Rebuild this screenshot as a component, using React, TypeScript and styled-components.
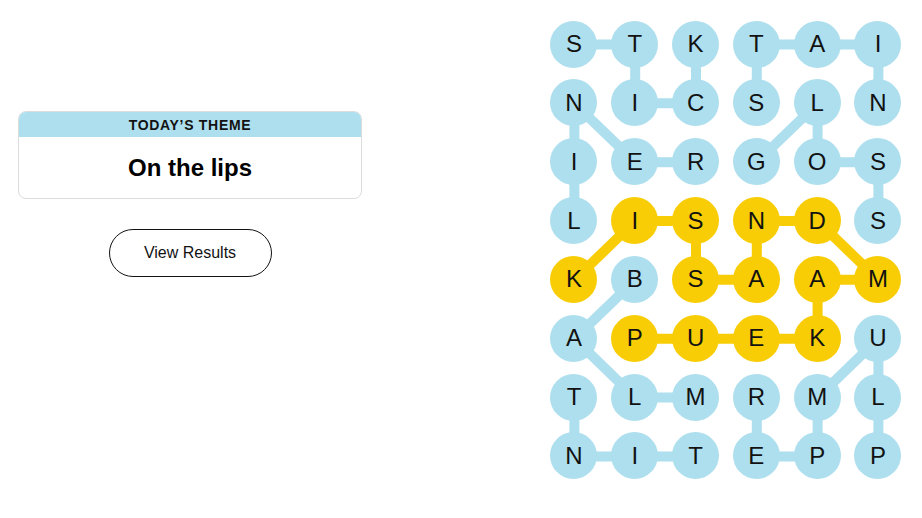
import React from 'react';
import styled, { createGlobalStyle } from 'styled-components';

const COL_W = 60.8;
const ROW_H = 58.857;
const BLUE = '#aedfee';
const GOLD = '#f8cd05';

const GlobalStyle = createGlobalStyle`
  html, body {
    margin: 0;
    padding: 0;
    background: #fff;
  }
  body {
    font-family: 'Liberation Sans', Arial, sans-serif;
    color: #121212;
  }
`;

const Page = styled.main`
  display: flex;
  align-items: flex-start;
  width: 922px;
  height: 518px;
  overflow: hidden;
`;

const Sidebar = styled.section`
  width: 344px;
  padding: 111px 0 0 18px;
  display: flex;
  flex-direction: column;
  align-items: center;
`;

const ThemeCard = styled.div`
  width: 100%;
  box-sizing: border-box;
  border: 1px solid #dcdcdc;
  border-radius: 8px;
  overflow: hidden;
`;

const ThemeLabel = styled.div`
  height: 25px;
  background: ${BLUE};
  display: flex;
  align-items: center;
  justify-content: center;
  font-size: 14px;
  font-weight: 700;
  letter-spacing: 0.7px;
  text-transform: uppercase;
  color: #121212;
`;

const ThemeTitle = styled.h1`
  margin: 0;
  height: 61px;
  display: flex;
  align-items: center;
  justify-content: center;
  font-size: 24px;
  font-weight: 700;
  color: #000;
`;

const ResultsButton = styled.button`
  margin-top: 30px;
  width: 163px;
  height: 48px;
  border: 1px solid #121212;
  border-radius: 24px;
  background: #fff;
  font-family: inherit;
  font-size: 16px;
  color: #121212;
  cursor: pointer;
`;

const Board = styled.div`
  position: relative;
  margin: 14.6px 0 0 181.6px;
  display: grid;
  grid-template-columns: repeat(6, ${COL_W}px);
  grid-template-rows: repeat(8, ${ROW_H}px);
`;

const Links = styled.svg`
  position: absolute;
  inset: 0;
  width: 100%;
  height: 100%;
  z-index: 0;
`;

const Cell = styled.div`
  position: relative;
  z-index: 1;
  display: flex;
  align-items: center;
  justify-content: center;
`;

const Letter = styled.span<{ $spangram: boolean }>`
  width: 47px;
  height: 47px;
  border-radius: 50%;
  background: ${(p) => (p.$spangram ? GOLD : BLUE)};
  display: flex;
  align-items: center;
  justify-content: center;
  font-size: 24px;
  color: #121212;
`;

const letters = [
  'STKTAI',
  'NICSLN',
  'IERGOS',
  'LISNDS',
  'KBSAAM',
  'APUEKU',
  'TLMRML',
  'NITEPP',
];

type Pos = [number, number];

const words: { word: string; spangram?: boolean; path: Pos[] }[] = [
  { word: 'STICK', path: [[0, 0], [0, 1], [1, 1], [1, 2], [0, 2]] },
  { word: 'STAIN', path: [[1, 3], [0, 3], [0, 4], [0, 5], [1, 5]] },
  { word: 'GLOSS', path: [[2, 3], [1, 4], [2, 4], [2, 5], [3, 5]] },
  { word: 'LINER', path: [[3, 0], [2, 0], [1, 0], [2, 1], [2, 2]] },
  { word: 'BALM', path: [[4, 1], [5, 0], [6, 1], [6, 2]] },
  { word: 'TINT', path: [[6, 0], [7, 0], [7, 1], [7, 2]] },
  { word: 'PLUMPER', path: [[7, 5], [6, 5], [5, 5], [6, 4], [7, 4], [7, 3], [6, 3]] },
  {
    word: 'KISSANDMAKEUP',
    spangram: true,
    path: [[4, 0], [3, 1], [3, 2], [4, 2], [4, 3], [3, 3], [3, 4], [4, 5], [4, 4], [5, 4], [5, 3], [5, 2], [5, 1]],
  },
];

const spangramCells = new Set(
  words.filter((w) => w.spangram).flatMap((w) => w.path.map(([r, c]) => `${r}-${c}`))
);

const center = ([r, c]: Pos) => [(c + 0.5) * COL_W, (r + 0.5) * ROW_H];

const App: React.FC = () => {
  return (
    <>
      <GlobalStyle />
      <Page>
        <Sidebar>
          <ThemeCard>
            <ThemeLabel>Today’s Theme</ThemeLabel>
            <ThemeTitle>On the lips</ThemeTitle>
          </ThemeCard>
          <ResultsButton>View Results</ResultsButton>
        </Sidebar>

        <Board>
          <Links>
            {words.map((w) =>
              w.path.slice(1).map((p, i) => {
                const [x1, y1] = center(w.path[i]);
                const [x2, y2] = center(p);
                return (
                  <line
                    key={`${w.word}-${i}`}
                    x1={x1}
                    y1={y1}
                    x2={x2}
                    y2={y2}
                    stroke={w.spangram ? GOLD : BLUE}
                    strokeWidth={10}
                  />
                );
              })
            )}
          </Links>
          {letters.map((row, r) =>
            row.split('').map((ch, c) => (
              <Cell key={`${r}-${c}`}>
                <Letter $spangram={spangramCells.has(`${r}-${c}`)}>{ch}</Letter>
              </Cell>
            ))
          )}
        </Board>
      </Page>
    </>
  );
};

export default App;
